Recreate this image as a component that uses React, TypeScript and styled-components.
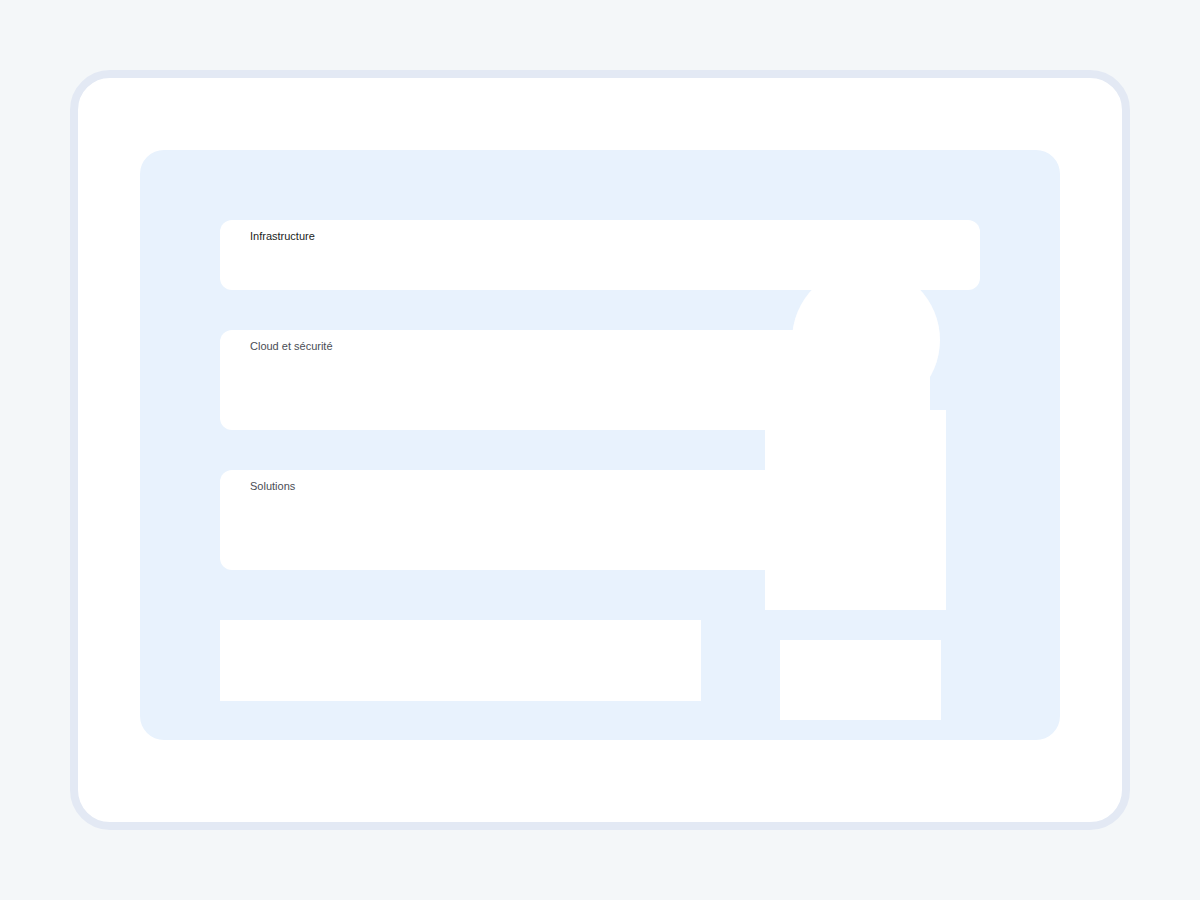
import React from 'react';
import styled, {createGlobalStyle} from 'styled-components';

const GlobalStyle = createGlobalStyle`
    html, body {
        margin: 0;
        padding: 0;
        background: #f4f7f9;
        font-family: "Liberation Sans", Arial, sans-serif;
    }
`;

const Page = styled.div`
    width: 1200px;
    height: 900px;
    box-sizing: border-box;
    padding: 70px;
`;

const Frame = styled.div`
    height: 760px;
    box-sizing: border-box;
    border: 8px solid #e3e9f4;
    border-radius: 40px;
    background: #ffffff;
    padding: 72px 62px;
`;

const Panel = styled.div`
    position: relative;
    height: 590px;
    box-sizing: border-box;
    background: #e8f2fd;
    border-radius: 24px;
    padding: 70px 80px 20px;
    display: flex;
    flex-direction: column;
`;

const Rows = styled.div`
    display: flex;
    flex-direction: column;
    gap: 40px;
`;

const Row = styled.div<{$height: number; $width: number}>`
    height: ${(p) => p.$height}px;
    width: ${(p) => p.$width}px;
    box-sizing: border-box;
    background: #ffffff;
    border-radius: 12px;
    padding: 6px 30px;
`;

const Label = styled.span<{$dark?: boolean}>`
    font-size: 11px;
    line-height: 13px;
    color: ${(p) => (p.$dark ? '#1b1d22' : '#4a4d55')};
`;

const Footer = styled.div`
    margin-top: 50px;
    display: flex;
    align-items: flex-start;
`;

const Block = styled.div<{$width: number; $height: number; $offset?: number}>`
    width: ${(p) => p.$width}px;
    height: ${(p) => p.$height}px;
    margin-top: ${(p) => p.$offset || 0}px;
    background: #ffffff;
`;

const Spacer = styled.div`
    width: 79px;
`;

const Bubble = styled.div`
    position: absolute;
    left: 652px;
    top: 116px;
    width: 148px;
    height: 148px;
    border-radius: 50%;
    background: #ffffff;
`;

const Tall = styled.div`
    position: absolute;
    left: 625px;
    top: 260px;
    width: 181px;
    height: 200px;
    background: #ffffff;
`;

export default function App() {
    return (
        <>
            <GlobalStyle/>
            <Page>
                <Frame>
                    <Panel>
                        <Rows>
                            <Row
                                $height={70}
                                $width={760}
                            >
                                <Label $dark={true}>{'Infrastructure'}</Label>
                            </Row>
                            <Row
                                $height={100}
                                $width={710}
                            >
                                <Label>{'Cloud et sécurité'}</Label>
                            </Row>
                            <Row
                                $height={100}
                                $width={600}
                            >
                                <Label>{'Solutions'}</Label>
                            </Row>
                        </Rows>
                        <Footer>
                            <Block
                                $width={481}
                                $height={81}
                            />
                            <Spacer/>
                            <Block
                                $width={161}
                                $height={80}
                                $offset={20}
                            />
                        </Footer>
                        <Bubble/>
                        <Tall/>
                    </Panel>
                </Frame>
            </Page>
        </>
    );
}
